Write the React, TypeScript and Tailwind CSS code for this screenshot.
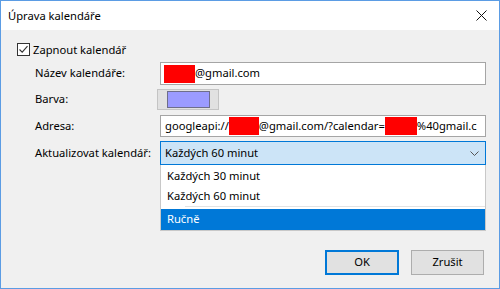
import { useState } from 'react';

// Dialog for editing a calendar subscription (Windows 10 look)
const CheckMark = () => (
  <svg width="11" height="11" viewBox="0 0 11 11" className="block">
    <path d="M1.5 5.5 L4.2 8.2 L9.5 2.2" fill="none" stroke="#333" strokeWidth="1.1" />
  </svg>
);

const Redacted = ({ w }: { w: number }) => (
  <span className="inline-block h-[18px] shrink-0 bg-[#ff0000]" style={{ width: w }} />
);

const Label = ({ children }: { children: React.ReactNode }) => (
  <div className="w-[125px] shrink-0">{children}</div>
);

export default function App() {
  const [enabled] = useState(true);

  return (
    <div
      className="flex h-[289px] w-[500px] flex-col overflow-hidden border border-[#5b9ce4] bg-[#f0f0f0] text-[11.2px] text-black"
      style={{ fontFamily: '"Noto Sans", "Open Sans", sans-serif' }}
    >
      {/* title bar */}
      <div className="flex h-[29px] shrink-0 items-center justify-between bg-white pl-[7px] pr-[12px]">
        <span className="leading-none">Úprava kalendáře</span>
        <svg width="11" height="11" viewBox="0 0 11 11" className="block">
          <path d="M0.5 0.5 L10.5 10.5 M10.5 0.5 L0.5 10.5" stroke="#111" strokeWidth="1" />
        </svg>
      </div>

      <div className="flex flex-1 flex-col pl-[16px] pr-[13px] pt-[13px]">
        {/* enable checkbox */}
        <div className="flex h-[13px] items-center gap-[3px]">
          <div className="flex h-[13px] w-[13px] items-center justify-center border border-[#333] bg-white">
            {enabled && <CheckMark />}
          </div>
          <span className="leading-none">Zapnout kalendář</span>
        </div>

        {/* form */}
        <div className="ml-[18px] mt-[6px] flex flex-col">
          <div className="flex h-[23px] items-center">
            <Label>Název kalendáře:</Label>
            <div className="flex h-full w-[326px] items-center border border-[#a5a5a5] bg-white pl-[3px]">
              <Redacted w={31} />
              <span>@gmail.com</span>
            </div>
          </div>

          <div className="mt-[4px] flex h-[21px] items-center">
            <Label>Barva:</Label>
            <div className="-ml-[3px] flex h-full w-[62px] items-center justify-center border border-[#c4c4c4] bg-[#e1e1e1]">
              <div className="h-[17px] w-[43px] border border-[#6e6e8a] bg-[#9b9bff]" />
            </div>
          </div>

          <div className="mt-[5px] flex h-[22px] items-center">
            <Label>Adresa:</Label>
            <div className="flex h-full w-[326px] items-center overflow-hidden whitespace-nowrap border border-[#a5a5a5] bg-white pl-[4px]">
              <span className="shrink-0">googleapi://</span>
              <Redacted w={30} />
              <span className="shrink-0">@gmail.com/?calendar=</span>
              <Redacted w={32} />
              <span className="shrink-0">%40gmail.c</span>
            </div>
          </div>

          <div className="mt-[4px] flex h-[24px] items-center">
            <Label>Aktualizovat kalendář:</Label>
            <div className="relative h-full w-[326px]">
              <div className="flex h-full items-center justify-between border border-[#0078d7] bg-[#cce4f7] pl-[4px] pr-[6px]">
                <span>Každých 60 minut</span>
                <svg width="9" height="5" viewBox="0 0 9 5" className="block">
                  <path d="M0.5 0.5 L4.5 4.5 L8.5 0.5" fill="none" stroke="#555" strokeWidth="1" />
                </svg>
              </div>
              {/* open list */}
              <div className="absolute left-0 top-full z-10 flex w-full flex-col border border-t-0 border-[#c8c8c8] bg-white">
                <div className="flex h-[21px] items-center pl-[6px] pt-[1px]">Každých 30 minut</div>
                <div className="flex h-[20px] items-center pl-[6px]">Každých 60 minut</div>
                <div className="ml-[24px] h-px bg-[#e3e3e3]" />
                <div className="h-[2px]" />
                <div className="flex h-[21px] items-center bg-[#0078d7] pl-[6px] text-white">Ručně</div>
              </div>
            </div>
          </div>
        </div>

        {/* buttons */}
        <div className="mt-[85px] flex justify-end gap-[12px] pr-[2px]">
          <button className="h-[25px] w-[74px] border-2 border-[#0078d7] bg-[#e1e1e1]">OK</button>
          <button className="h-[25px] w-[73px] border border-[#adadad] bg-[#e1e1e1]">Zrušit</button>
        </div>
      </div>
    </div>
  );
}
